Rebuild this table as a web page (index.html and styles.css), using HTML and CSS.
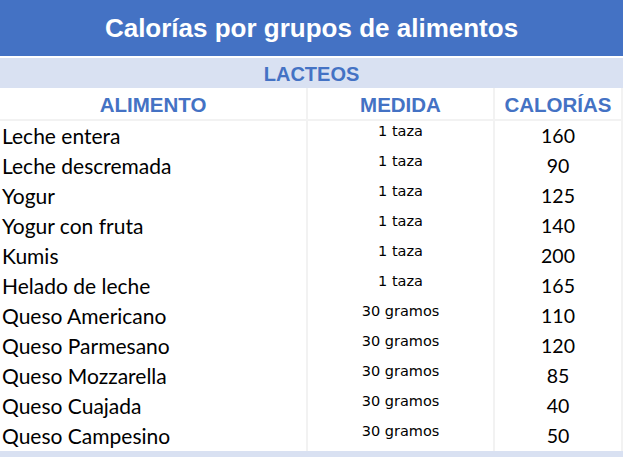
FILE: index.html
```html
<!DOCTYPE html>
<html lang="es">
<head>
<meta charset="utf-8">
<title>Calorías por grupos de alimentos</title>
<link rel="stylesheet" href="styles.css">
</head>
<body>
<div class="sheet">
  <div class="title">Calorías por grupos de alimentos</div>
  <div class="group">LACTEOS</div>
  <table class="foods">
    <colgroup>
      <col class="c1"><col class="c2"><col class="c3">
    </colgroup>
    <thead>
      <tr><th>ALIMENTO</th><th>MEDIDA</th><th>CALORÍAS</th></tr>
    </thead>
    <tbody>
      <tr><td class="name">Leche entera</td><td class="qty">1 taza</td><td class="cal">160</td></tr>
      <tr><td class="name">Leche descremada</td><td class="qty">1 taza</td><td class="cal">90</td></tr>
      <tr><td class="name">Yogur</td><td class="qty">1 taza</td><td class="cal">125</td></tr>
      <tr><td class="name">Yogur con fruta</td><td class="qty">1 taza</td><td class="cal">140</td></tr>
      <tr><td class="name">Kumis</td><td class="qty">1 taza</td><td class="cal">200</td></tr>
      <tr><td class="name">Helado de leche</td><td class="qty">1 taza</td><td class="cal">165</td></tr>
      <tr><td class="name">Queso Americano</td><td class="qty">30 gramos</td><td class="cal">110</td></tr>
      <tr><td class="name">Queso Parmesano</td><td class="qty">30 gramos</td><td class="cal">120</td></tr>
      <tr><td class="name">Queso Mozzarella</td><td class="qty">30 gramos</td><td class="cal">85</td></tr>
      <tr><td class="name">Queso Cuajada</td><td class="qty">30 gramos</td><td class="cal">40</td></tr>
      <tr><td class="name">Queso Campesino</td><td class="qty">30 gramos</td><td class="cal">50</td></tr>
    </tbody>
  </table>
  <div class="footer-band"></div>
</div>
</body>
</html>
```
FILE: styles.css
```css
html, body {
  margin: 0;
  padding: 0;
  background: #ffffff;
}
.sheet {
  width: 623px;
  display: flex;
  flex-direction: column;
}
.title {
  height: 56px;
  background: #4472c4;
  color: #ffffff;
  font-family: "Liberation Sans", Arial, sans-serif;
  font-weight: bold;
  font-size: 26px;
  line-height: 56px;
  text-align: center;
  margin-bottom: 2px;
}
.group {
  height: 30px;
  box-sizing: border-box;
  padding-top: 2px;
  background: #d9e1f2;
  color: #4472c4;
  font-family: "Liberation Sans", Arial, sans-serif;
  font-weight: bold;
  font-size: 20px;
  line-height: 28px;
  text-align: center;
}
.foods {
  width: 623px;
  border-collapse: separate;
  border-spacing: 0;
  table-layout: fixed;
}
.c1 { width: 308px; }
.c2 { width: 187px; }
.c3 { width: 128px; }
.foods th, .foods td {
  padding: 0;
  border-right: 2px solid #f2f2f2;
  vertical-align: top;
  white-space: nowrap;
}
.foods th {
  height: 33px;
  border-bottom: 2px solid #f2f2f2;
  color: #4472c4;
  font-family: "Liberation Sans", Arial, sans-serif;
  font-weight: bold;
  font-size: 20.5px;
  line-height: 29px;
  padding-top: 2px;
  box-sizing: border-box;
  text-align: center;
}
.foods td {
  height: 30px;
  box-sizing: border-box;
  color: #000000;
}
.name {
  padding-left: 2px !important;
  font-family: Lato, "Open Sans", sans-serif;
  font-size: 21px;
  line-height: 30px;
}
.qty {
  text-align: center;
  font-family: "DejaVu Sans", sans-serif;
  font-size: 14.5px;
  line-height: 20px;
}
.cal {
  text-align: center;
  font-family: Lato, "Open Sans", sans-serif;
  font-size: 19.5px;
  line-height: 30px;
}
.footer-band {
  height: 6px;
  background: #d9e1f2;
}
```
